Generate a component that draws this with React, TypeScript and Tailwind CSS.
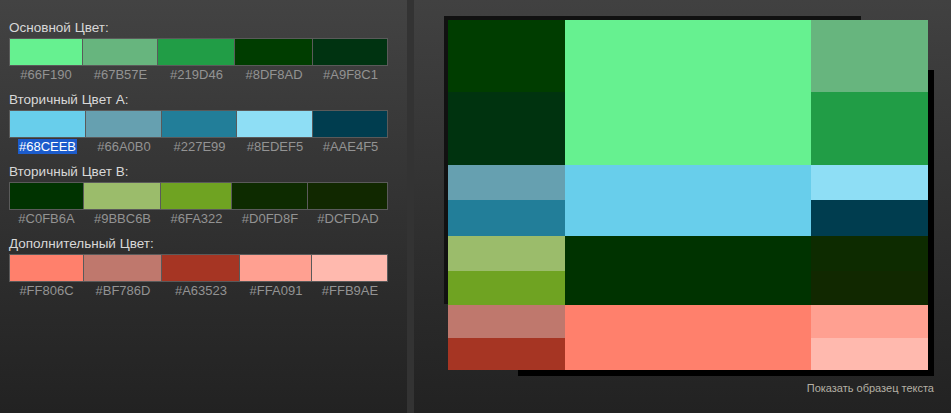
const groups = [
  {
    title: "Основной Цвет:",
    cols: "grid-cols-[74px_75px_77px_78px_75px]",
    items: [
      { bg: "bg-[#66F190]", hex: "#66F190" },
      { bg: "bg-[#67B57E]", hex: "#67B57E" },
      { bg: "bg-[#219D46]", hex: "#219D46" },
      { bg: "bg-[#003D00]", hex: "#8DF8AD" },
      { bg: "bg-[#003311]", hex: "#A9F8C1" },
    ],
  },
  {
    title: "Вторичный Цвет A:",
    cols: "grid-cols-[77px_76px_75px_76px_75px]",
    items: [
      { bg: "bg-[#68CEEB]", hex: "#68CEEB", selected: true },
      { bg: "bg-[#66A0B0]", hex: "#66A0B0" },
      { bg: "bg-[#227E99]", hex: "#227E99" },
      { bg: "bg-[#8EDEF5]", hex: "#8EDEF5" },
      { bg: "bg-[#003D4F]", hex: "#AAE4F5" },
    ],
  },
  {
    title: "Вторичный Цвет B:",
    cols: "grid-cols-[75px_77px_71px_76px_80px]",
    items: [
      { bg: "bg-[#003300]", hex: "#C0FB6A" },
      { bg: "bg-[#9BBC6B]", hex: "#9BBC6B" },
      { bg: "bg-[#6FA322]", hex: "#6FA322" },
      { bg: "bg-[#0D2B00]", hex: "#D0FD8F" },
      { bg: "bg-[#112800]", hex: "#DCFDAD" },
    ],
  },
  {
    title: "Дополнительный Цвет:",
    cols: "grid-cols-[75px_78px_78px_72px_76px]",
    items: [
      { bg: "bg-[#FF806C]", hex: "#FF806C" },
      { bg: "bg-[#BF786D]", hex: "#BF786D" },
      { bg: "bg-[#A63523]", hex: "#A63523" },
      { bg: "bg-[#FFA091]", hex: "#FFA091" },
      { bg: "bg-[#FFB9AE]", hex: "#FFB9AE" },
    ],
  },
];

function Group({ g }: { g: (typeof groups)[number] }) {
  return (
    <div className="mb-[8px]">
      <div className="text-[13.5px] leading-[20px] text-[#d8d8d8]">{g.title}</div>
      <div className={`grid ${g.cols}`}>
        {g.items.map((it, i) => (
          <div
            key={it.hex}
            className={[
              "h-[28px] border-y border-[#5a5a5a]",
              i === 0 ? "border-l" : "",
              "border-r",
              it.bg,
            ].join(" ")}
          />
        ))}
        {g.items.map((it) => (
          <div key={it.hex + "-t"} className="flex justify-center">
            <span
              className={[
                "text-[13px] leading-[15px] mt-[1px] px-[1px]",
                it.selected ? "bg-[#1c5ccc] text-white" : "text-[#939393]",
              ].join(" ")}
            >
              {it.hex}
            </span>
          </div>
        ))}
      </div>
    </div>
  );
}

export default function App() {
  return (
    <div
      className="flex h-[413px] w-[951px] overflow-hidden bg-[#222]"
      style={{ fontFamily: '"Liberation Sans", Arial, sans-serif' }}
    >
      <div className="w-[407px] shrink-0 bg-gradient-to-b from-[#434343] to-[#222] pl-[9px] pt-[18px]">
        {groups.map((g) => (
          <Group key={g.title} g={g} />
        ))}
      </div>
      <div className="w-[7px] shrink-0 bg-[#333]" />
      <div className="flex-1 bg-gradient-to-b from-[#414141] to-[#222] pt-[20px] pl-[34px]">
        <div className="relative w-[480px] h-[350px]">
          <div className="absolute left-[-4px] top-[-4px] w-[417px] h-[288px] bg-[#111]" />
          <div className="absolute left-[70px] top-[50px] w-[416px] h-[306px] bg-black" />
          <div className="relative grid grid-cols-[117px_246px_117px] grid-rows-[72px_73px_35px_36px_35px_34px_33px_32px] h-[350px]">
            <div className="col-start-1 row-start-1 bg-[#003D00]" />
            <div className="col-start-1 row-start-2 bg-[#00330F]" />
            <div className="col-start-1 row-start-3 bg-[#66A0B0]" />
            <div className="col-start-1 row-start-4 bg-[#227E99]" />
            <div className="col-start-1 row-start-5 bg-[#9BBC6B]" />
            <div className="col-start-1 row-start-6 bg-[#6FA322]" />
            <div className="col-start-1 row-start-7 bg-[#BF786D]" />
            <div className="col-start-1 row-start-8 bg-[#A63523]" />
            <div className="col-start-2 row-start-1 row-span-2 bg-[#66F190]" />
            <div className="col-start-2 row-start-3 row-span-2 bg-[#68CEEB]" />
            <div className="col-start-2 row-start-5 row-span-2 bg-[#003300]" />
            <div className="col-start-2 row-start-7 row-span-2 bg-[#FF806C]" />
            <div className="col-start-3 row-start-1 bg-[#67B57E]" />
            <div className="col-start-3 row-start-2 bg-[#219D46]" />
            <div className="col-start-3 row-start-3 bg-[#8EDEF5]" />
            <div className="col-start-3 row-start-4 bg-[#003D4F]" />
            <div className="col-start-3 row-start-5 bg-[#0D2B00]" />
            <div className="col-start-3 row-start-6 bg-[#112800]" />
            <div className="col-start-3 row-start-7 bg-[#FFA091]" />
            <div className="col-start-3 row-start-8 bg-[#FFB9AE]" />
          </div>
        </div>
        <div className="w-[486px] mt-[11px] text-right text-[11px] leading-[14px] text-[#b4b0a4]">
          Показать образец текста
        </div>
      </div>
    </div>
  );
}
